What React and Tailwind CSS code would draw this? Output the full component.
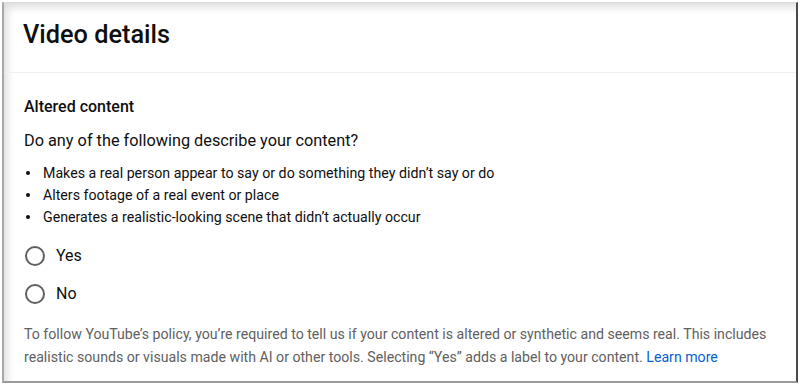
export default function App() {
  const font = { fontFamily: 'Roboto, "Liberation Sans", Arial, sans-serif' };
  return (
    <div className="w-[800px] h-[386px] bg-white pt-[2px] pl-[2px]" style={font}>
      <div className="w-[796px] h-[381px] bg-white border-t border-t-[#d9d9d9] border-l-2 border-l-[#a8a8a8] border-r-2 border-r-[#4a4a4a] border-b-2 border-b-[#9a9a9a] shadow-[inset_9px_10px_8px_-6px_rgba(0,0,0,0.14)] flex flex-col">
        <div className="pl-[19px] pt-[16px] text-[25.3px] leading-[32px] font-medium text-[#0f0f0f]">Video details</div>
        <div className="mt-[21px] h-px bg-[#f0f0f0]" />
        <div className="pl-[20px]">
          <div className="mt-[24px] text-[16px] leading-[20px] font-medium text-[#0f0f0f]">Altered content</div>
          <div className="mt-[12px] text-[16.3px] leading-[24px] text-[#0f0f0f]">Do any of the following describe your content?</div>
          <ul className="mt-[9px] text-[14.2px] leading-[22px] text-[#0f0f0f]">
            {[
              'Makes a real person appear to say or do something they didn’t say or do',
              'Alters footage of a real event or place',
              'Generates a realistic-looking scene that didn’t actually occur',
            ].map((t) => (
              <li key={t} className="flex items-center">
                <span className="w-[19px] pl-[2px] flex items-center">
                  <span className="w-[4px] h-[4px] rounded-full bg-[#0f0f0f]" />
                </span>
                <span>{t}</span>
              </li>
            ))}
          </ul>
          <div className="mt-[9px] flex flex-col">
            {['Yes', 'No'].map((t) => (
              <div key={t} className="h-[38px] flex items-center">
                <span className="w-[20px] h-[20px] rounded-full border-2 border-[#606060] ml-[1px]" />
                <span className="ml-[11px] text-[16px] text-[#0f0f0f]">{t}</span>
              </div>
            ))}
          </div>
          <p className="mt-[10px] text-[14.15px] leading-[23px] text-[#606060] pr-[6px]">
            To follow YouTube’s policy, you’re required to tell us if your content is altered or synthetic and seems real. This includes realistic sounds or visuals made with AI or other tools. Selecting “Yes” adds a label to your content. <span className="text-[#065fd4]">Learn more</span>
          </p>
        </div>
      </div>
    </div>
  );
}
